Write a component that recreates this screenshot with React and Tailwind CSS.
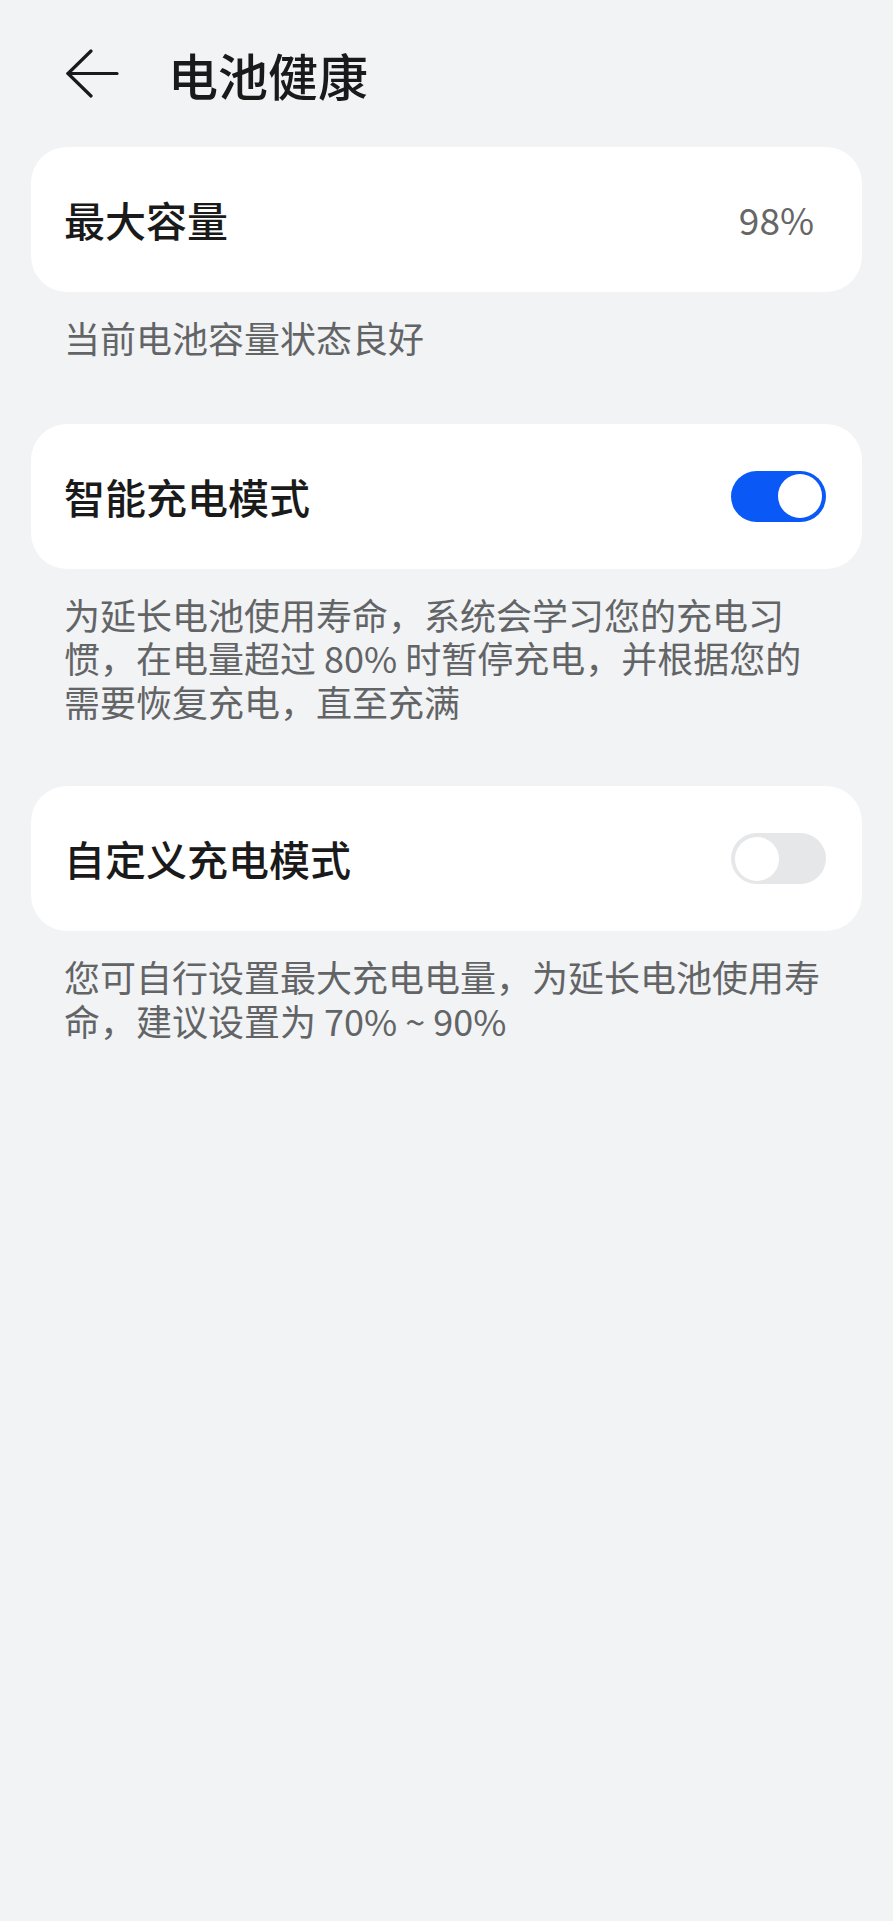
import React from "react";

const font = { fontFamily: '"Noto Sans CJK SC", "Noto Sans", sans-serif' };

const BackArrow = () => (
    <svg width="54" height="50" viewBox="0 0 54 50" fill="none" stroke="#1a1a1a" strokeWidth="3.2" strokeLinecap="round" strokeLinejoin="round">
        <path d="M52 24.5H3" />
        <path d="M26 2L3 24.5L26 47" />
    </svg>
);

const Toggle = ({ on }) => (
    <div className={`w-[95px] h-[51px] rounded-full flex items-center px-[4px] ${on ? "bg-[#0a59f7] justify-end" : "bg-[#e6e7e8] justify-start"}`}>
        <div className="w-[44px] h-[44px] rounded-full bg-white" />
    </div>
);

const Card = ({ title, children }) => (
    <div className="h-[145px] rounded-[36px] bg-white pl-[33px] pr-[36px] flex items-center justify-between">
        <span className="text-[41px] font-medium text-[#1a1a1a] leading-none">{title}</span>
        {children}
    </div>
);

const Desc = ({ children }) => (
    <p className="mt-[24px] px-[33px] text-[36px] leading-[43.5px] text-[#636466]">{children}</p>
);

const App = () => (
    <div className="w-full min-h-screen bg-[#f1f3f5]" style={font}>
        <div className="h-[147px] flex items-center pl-[65px]">
            <BackArrow />
            <h1 className="ml-[49px] text-[50px] font-medium text-[#1a1a1a] leading-none">电池健康</h1>
        </div>
        <div className="px-[31px] flex flex-col">
            <Card title="最大容量">
                <span className="mr-[12px] text-[37px] text-[#666666] leading-none">98%</span>
            </Card>
            <Desc>当前电池容量状态良好</Desc>

            <div className="mt-[64px]">
                <Card title="智能充电模式">
                    <Toggle on />
                </Card>
            </div>
            <Desc>
                为延长电池使用寿命，系统会学习您的充电习<br />
                惯，在电量超过 80% 时暂停充电，并根据您的<br />
                需要恢复充电，直至充满
            </Desc>

            <div className="mt-[63px]">
                <Card title="自定义充电模式">
                    <Toggle on={false} />
                </Card>
            </div>
            <Desc>
                您可自行设置最大充电电量，为延长电池使用寿<br />
                命，建议设置为 70% ~ 90%
            </Desc>
        </div>
    </div>
);

export default App;
